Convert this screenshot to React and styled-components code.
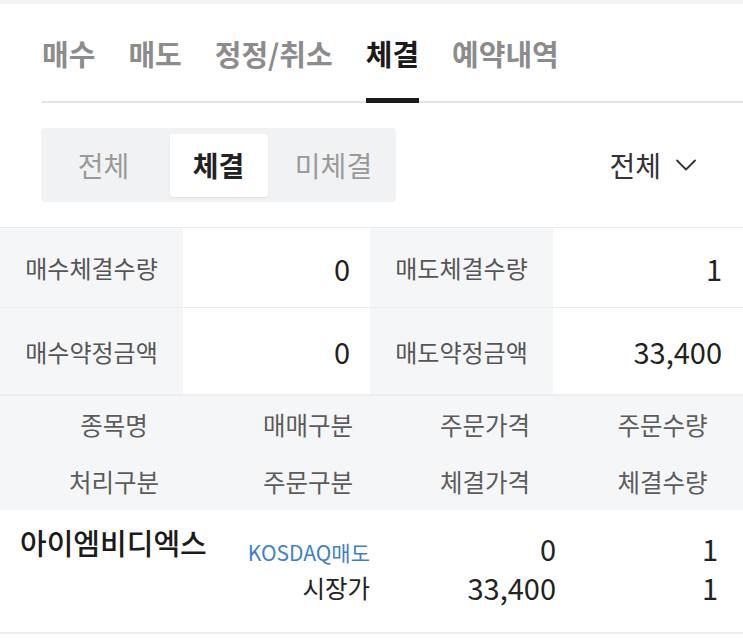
import React, { useState } from 'react';
import styled, { createGlobalStyle } from 'styled-components';

const GlobalStyle = createGlobalStyle`
	body {
		margin: 0;
		background: #ffffff;
		font-family: 'Noto Sans CJK KR', 'Noto Sans', sans-serif;
		color: #222;
	}
`;

const tabs = ['매수', '매도', '정정/취소', '체결', '예약내역'];
const filters = ['전체', '체결', '미체결'];

const summary = [
	['매수체결수량', '0', '매도체결수량', '1'],
	['매수약정금액', '0', '매도약정금액', '33,400'],
];

const heads = [
	['종목명', '매매구분', '주문가격', '주문수량'],
	['처리구분', '주문구분', '체결가격', '체결수량'],
];

function App() {
	const [tab, setTab] = useState(3);
	const [filter, setFilter] = useState(1);

	return (
		<Page>
			<GlobalStyle />
			<TopStrip />
			<TabBar>
				{tabs.map((t, i) => (
					<Tab key={t} active={i === tab} onClick={() => setTab(i)}>
						{t}
					</Tab>
				))}
			</TabBar>

			<FilterRow>
				<Segment>
					{filters.map((f, i) => (
						<SegmentItem key={f}>
							<SegmentButton active={i === filter} onClick={() => setFilter(i)}>
								{f}
							</SegmentButton>
						</SegmentItem>
					))}
				</Segment>
				<Dropdown>
					전체
					<svg width="22" height="14" viewBox="0 0 22 14" fill="none">
						<path d="M2 2.5 L11 11.5 L20 2.5" stroke="#333" strokeWidth="1.8" strokeLinecap="round" strokeLinejoin="round" />
					</svg>
				</Dropdown>
			</FilterRow>

			<Summary>
				{summary.map((row) => (
					<React.Fragment key={row[0]}>
						<SumLabel>{row[0]}</SumLabel>
						<SumValue>{row[1]}</SumValue>
						<SumLabel>{row[2]}</SumLabel>
						<SumValue last>{row[3]}</SumValue>
					</React.Fragment>
				))}
			</Summary>

			<Header>
				{heads.map((row) =>
					row.map((h) => <HeadCell key={h}>{h}</HeadCell>)
				)}
			</Header>

			<DataRow>
				<NameCell>아이엠비디엑스</NameCell>
				<Cell pad={18}>
					<Market>KOSDAQ매도</Market>
					<Line small>시장가</Line>
				</Cell>
				<Cell pad={26}>
					<Line>0</Line>
					<Line>33,400</Line>
				</Cell>
				<Cell pad={25}>
					<Line>1</Line>
					<Line>1</Line>
				</Cell>
			</DataRow>
		</Page>
	);
}

export default App;

const Page = styled.div`
	width: 743px;
	height: 644px;
	overflow: hidden;
	background: #fff;
`;

const TopStrip = styled.div`
	height: 4px;
	background: #f2f3f5;
`;

const TabBar = styled.div`
	display: flex;
	gap: 33px;
	height: 97px;
	margin-left: 42px;
	border-bottom: 2px solid #e3e4e6;
`;

const Tab = styled.div`
	box-sizing: border-box;
	display: flex;
	align-items: center;
	padding-top: 4px;
	margin-bottom: -2px;
	border-bottom: 5px solid ${(p) => (p.active ? '#1b1b1b' : 'transparent')};
	font-size: 29px;
	font-weight: 700;
	color: ${(p) => (p.active ? '#1b1b1b' : '#8c8c8c')};
	cursor: pointer;
`;

const FilterRow = styled.div`
	display: flex;
	align-items: center;
	justify-content: space-between;
	padding: 25px 46px 25px 41px;
`;

const Segment = styled.div`
	display: grid;
	grid-template-columns: repeat(3, 115px);
	align-items: center;
	box-sizing: border-box;
	width: 355px;
	height: 74px;
	padding: 0 5px;
	background: #f1f2f4;
	border-radius: 4px;
`;

const SegmentItem = styled.div`
	display: flex;
	justify-content: center;
`;

const SegmentButton = styled.div`
	display: flex;
	align-items: center;
	justify-content: center;
	width: 98px;
	height: 63px;
	border-radius: 3px;
	background: ${(p) => (p.active ? '#ffffff' : 'transparent')};
	box-shadow: ${(p) => (p.active ? '0 1px 2px rgba(0,0,0,0.08)' : 'none')};
	font-size: 28px;
	font-weight: ${(p) => (p.active ? 700 : 400)};
	color: ${(p) => (p.active ? '#222' : '#9a9a9a')};
	cursor: pointer;
`;

const Dropdown = styled.div`
	display: flex;
	align-items: center;
	gap: 14px;
	font-size: 28px;
	color: #333;
`;

const Summary = styled.div`
	display: grid;
	grid-template-columns: 183px 187px 183px 190px;
	grid-template-rows: 80px 86px;
	border-top: 1px solid #e8eaed;
	border-bottom: 2px solid #eceef0;
	& > div:nth-child(-n + 4) {
		border-bottom: 1px solid #eceef0;
	}
`;

const SumLabel = styled.div`
	display: flex;
	align-items: center;
	justify-content: center;
	background: #f5f6f8;
	font-size: 24px;
	color: #555;
`;

const SumValue = styled.div`
	display: flex;
	align-items: center;
	justify-content: flex-end;
	padding-right: ${(p) => (p.last ? '21px' : '20px')};
	font-size: 29px;
	color: #222;
`;

const Header = styled.div`
	display: grid;
	grid-template-columns: 228px 160px 194px 1fr;
	grid-auto-rows: 57px;
	background: #f5f6f8;
`;

const HeadCell = styled.div`
	display: flex;
	align-items: center;
	justify-content: center;
	font-size: 24.5px;
	color: #5c5c5c;
`;

const DataRow = styled.div`
	display: grid;
	grid-template-columns: 228px 160px 194px 1fr;
	height: 103px;
	padding-top: 19px;
	border-bottom: 2px solid #eceef0;
`;

const NameCell = styled.div`
	margin-top: -6px;
	padding-left: 20px;
	font-size: 29px;
	font-weight: 500;
	line-height: 39px;
	color: #1b1b1b;
`;

const Cell = styled.div`
	display: flex;
	flex-direction: column;
	align-items: flex-end;
	padding-right: ${(p) => p.pad}px;
`;

const Line = styled.div`
	line-height: 39px;
	font-size: ${(p) => (p.small ? '24.5px' : '29px')};
	color: #222;
`;

const Market = styled.div`
	box-sizing: border-box;
	height: 39px;
	padding-top: 8px;
	line-height: 30px;
	font-size: 21px;
	color: #3f7fca;
`;
